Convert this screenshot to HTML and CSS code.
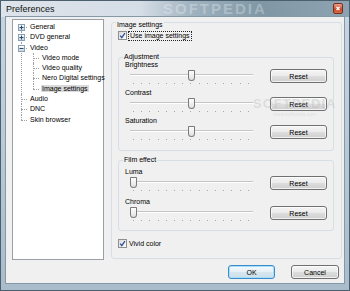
FILE: index.html
```html
<!DOCTYPE html>
<html lang="en">
<head>
    <meta charset="UTF-8">
    <title>Preferences</title>
    <link rel="stylesheet" href="styles.css">
</head>
<body>
    <div class="window">
        <div class="titlebar">
            <span class="title">Preferences</span>
            <span class="mark-title">SOFTPEDIA</span>
            <span class="close">
                <svg width="10" height="11" viewBox="0 0 10 11">
                    <path d="M3.5 4 L6.5 7 M6.5 4 L3.5 7" stroke="#fff" stroke-width="1.2"/>
                </svg>
            </span>
        </div>

        <div class="client">
            <div class="main">
                <!-- arvore de paginas -->
                <div class="tree">
                    <ul class="root">
                        <li class="first"><span class="exp"><svg width="7" height="7" viewBox="0 0 7 7"><path d="M1.5 3.5 H5.5 M3.5 1.5 V5.5" stroke="#2a4a6e"/></svg></span><span class="label">General</span></li>
                        <li><span class="exp"><svg width="7" height="7" viewBox="0 0 7 7"><path d="M1.5 3.5 H5.5 M3.5 1.5 V5.5" stroke="#2a4a6e"/></svg></span><span class="label">DVD general</span></li>
                        <li><span class="exp"><svg width="7" height="7" viewBox="0 0 7 7"><path d="M1.5 3.5 H5.5" stroke="#2a4a6e"/></svg></span><span class="label">Video</span>
                            <ul class="children">
                                <li><span class="label">Video mode</span></li>
                                <li><span class="label">Video quality</span></li>
                                <li><span class="label">Nero Digital settings</span></li>
                                <li class="last"><span class="label selected">Image settings</span></li>
                            </ul>
                        </li>
                        <li><span class="label">Audio</span></li>
                        <li><span class="label">DNC</span></li>
                        <li class="last"><span class="label">Skin browser</span></li>
                    </ul>
                </div>

                <div class="page">
                    <div class="page-title">Image settings</div>
                    <label class="check">
                        <span class="box"><svg width="9" height="9" viewBox="0 0 9 9"><path d="M2.2 4.6 L3.8 6.6 L6.9 2.2" fill="none" stroke="#2c4d9c" stroke-width="1.3"/></svg></span>
                        <span class="focus">Use image settings</span>
                    </label>

                    <div class="group adjust">
                        <div class="legend">Adjustment</div>
                        <div class="slider-row">
                            <div class="slider-col">
                                <div class="slider-label">Brightness</div>
                                <div class="slider"><span class="track"></span><span class="ticks"></span><span class="thumb" style="left:58px"></span></div>
                            </div>
                            <button class="btn">Reset</button>
                        </div>
                        <div class="slider-row">
                            <div class="slider-col">
                                <div class="slider-label">Contrast</div>
                                <div class="slider"><span class="track"></span><span class="ticks"></span><span class="thumb" style="left:58px"></span></div>
                            </div>
                            <button class="btn">Reset</button>
                        </div>
                        <div class="slider-row">
                            <div class="slider-col">
                                <div class="slider-label">Saturation</div>
                                <div class="slider"><span class="track"></span><span class="ticks"></span><span class="thumb" style="left:58px"></span></div>
                            </div>
                            <button class="btn">Reset</button>
                        </div>
                    </div>

                    <div class="group film">
                        <div class="legend">Film effect</div>
                        <div class="slider-row">
                            <div class="slider-col">
                                <div class="slider-label">Luma</div>
                                <div class="slider"><span class="track"></span><span class="ticks"></span><span class="thumb" style="left:0px"></span></div>
                            </div>
                            <button class="btn">Reset</button>
                        </div>
                        <div class="slider-row">
                            <div class="slider-col">
                                <div class="slider-label">Chroma</div>
                                <div class="slider"><span class="track"></span><span class="ticks"></span><span class="thumb" style="left:0px"></span></div>
                            </div>
                            <button class="btn">Reset</button>
                        </div>
                    </div>

                    <label class="check vivid">
                        <span class="box"><svg width="9" height="9" viewBox="0 0 9 9"><path d="M2.2 4.6 L3.8 6.6 L6.9 2.2" fill="none" stroke="#2c4d9c" stroke-width="1.3"/></svg></span>
                        <span>Vivid color</span>
                    </label>

                    <div class="mark-page">SOFTPEDIA<small>www.softpedia.com</small></div>
                </div>
            </div>

            <div class="actions">
                <button class="btn default">OK</button>
                <button class="btn cancel">Cancel</button>
            </div>
        </div>
    </div>
</body>
</html>
```

FILE: styles.css
```css
* {
    margin: 0;
    padding: 0;
    box-sizing: border-box;
}

body {
    font-family: "Liberation Sans", Arial, sans-serif;
    font-size: 7px;
    color: #000;
    background: #6f8595;
}

.window {
    width: 350px;
    height: 291px;
    display: flex;
    flex-direction: column;
    padding: 0 4px 6px 4px;
    border: 1px solid #4c5f6e;
    background:
        linear-gradient(to right, #dde3ea 0%, #d5dde6 40%, #9fb2bf 55%, #7f97a5 75%, #8ea3b1 100%) no-repeat top / 100% 16px,
        linear-gradient(to bottom, #c8d6e2, #a9bccb);
}

.titlebar {
    position: relative;
    height: 15px;
    display: flex;
    align-items: center;
    justify-content: space-between;
    padding-left: 1px;
}

.title {
    font-size: 9px;
    color: #111;
}

.mark-title {
    position: absolute;
    left: 158px;
    top: -1px;
    font-size: 15px;
    font-weight: bold;
    letter-spacing: 2px;
    color: rgba(255, 255, 255, 0.28);
}

.close {
    width: 10px;
    height: 11px;
    margin-right: 2px;
    border: 1px solid #7b2e1f;
    border-radius: 2px;
    background: linear-gradient(#e9a08a, #d2593d 50%, #c1401f 51%, #d86a45);
    display: flex;
}

.close svg {
    margin: -1px;
}

.client {
    flex: 1;
    display: flex;
    flex-direction: column;
    background: #f0f0f0;
    border: 1px solid #8598a6;
    padding: 2px 2px 4px 6px;
}

.main {
    display: flex;
    gap: 7px;
    height: 241px;
}

/* arvore */
.tree {
    width: 92px;
    height: 241px;
    background: #fff;
    border: 1px solid #9a9fa5;
    padding-top: 2px;
    line-height: 10.3px;
}

.tree ul {
    list-style: none;
}

.tree li {
    position: relative;
    padding-left: 16px;
    white-space: nowrap;
}

.tree li::before {
    content: "";
    position: absolute;
    left: 8px;
    top: 5px;
    width: 6px;
    border-top: 1px dotted #a0a0a0;
}

.tree li::after {
    content: "";
    position: absolute;
    left: 8px;
    top: 0;
    bottom: 0;
    border-left: 1px dotted #a0a0a0;
}

.tree li.first::after {
    top: 5px;
}

.tree li.last::after {
    bottom: auto;
    height: 5px;
}

.tree .children {
    margin-left: -4px;
}

.exp {
    position: absolute;
    left: 5px;
    top: 2px;
    width: 7px;
    height: 7px;
    z-index: 1;
    border: 1px solid #8aa0b5;
    background: linear-gradient(#ffffff, #c9d3dc);
    display: flex;
}

.exp svg {
    margin: -1px;
}

.label {
    padding: 0 1px;
}

.label.selected {
    background: #d9d9d9;
}

/* pagina da direita */
.page {
    position: relative;
    width: 231px;
    height: 237px;
    margin-top: 3px;
    border: 1px solid #d5dfe5;
    border-radius: 3px;
    padding: 0 7px 0 6px;
    display: flex;
    flex-direction: column;
}

.page-title {
    margin: -2px 0 0 -2px;
    line-height: 8px;
    width: fit-content;
    padding: 0 1px;
    background: #f0f0f0;
}

.check {
    display: flex;
    align-items: center;
    gap: 2px;
    height: 9px;
    margin-top: 2px;
    line-height: 8px;
}

.box {
    width: 9px;
    height: 9px;
    border: 1px solid #8f8f8f;
    background: linear-gradient(135deg, #dcdcdc, #fbfbfb);
    display: flex;
}

.box svg {
    margin: -1px;
}

.focus {
    outline: 1px dotted #222;
    padding: 0 1px;
}

.group {
    border: 1px solid #d5dfe5;
    border-radius: 3px;
    padding: 0 6px 5px 6px;
    display: flex;
    flex-direction: column;
}

.adjust {
    margin-top: 17px;
}

.film {
    margin-top: 9px;
    padding-bottom: 2px;
}

.legend {
    width: fit-content;
    margin: -5px 0 0 -2px;
    padding: 0 1px;
    line-height: 8px;
    background: #f0f0f0;
}

.slider-row {
    display: flex;
    justify-content: space-between;
    align-items: flex-start;
    height: 28px;
}

.adjust .slider-row:first-of-type {
    margin-top: 2px;
}

.film .slider-row {
    height: 30px;
}

.film .legend + .slider-row {
    margin-top: 4px;
}

.slider-label {
    line-height: 8px;
}

.slider {
    position: relative;
    width: 123px;
    height: 18px;
    margin-left: 5px;
}

.track {
    position: absolute;
    left: 0;
    right: 0;
    top: 5px;
    height: 2px;
    background: #c3c6c9;
    border-bottom: 1px solid #fff;
}

.ticks {
    position: absolute;
    left: 3px;
    right: 2px;
    top: 14px;
    height: 1px;
    background: repeating-linear-gradient(to right, #a8a8a8 0 1px, transparent 1px 8.2px);
}

.thumb {
    position: absolute;
    top: 1px;
    width: 7px;
    height: 11px;
    border: 1px solid #7a7a7a;
    border-radius: 1px 1px 4px 4px;
    background: linear-gradient(#fdfdfd, #e2e2e2);
}

.btn {
    width: 57px;
    height: 14px;
    margin-top: 8px;
    border: 1px solid #707070;
    border-radius: 3px;
    background: linear-gradient(#f4f4f4 0%, #ebebeb 48%, #dddddd 52%, #cfcfcf 100%);
    box-shadow: inset 0 0 0 1px rgba(255, 255, 255, 0.7);
    font-family: inherit;
    font-size: 7px;
    color: #000;
}

.vivid {
    margin-top: 8px;
}

.mark-page {
    position: absolute;
    left: 141px;
    top: 74px;
    font-size: 13px;
    font-weight: bold;
    letter-spacing: 1px;
    color: rgba(170, 170, 170, 0.28);
    display: flex;
    flex-direction: column;
    align-items: center;
    line-height: 13px;
}

.mark-page small {
    font-size: 5px;
    font-weight: normal;
    letter-spacing: 0;
    line-height: 8px;
}

.actions {
    display: flex;
    justify-content: flex-end;
    gap: 16px;
    margin-top: 5px;
    padding-right: 3px;
}

.actions .btn {
    margin-top: 0;
    width: 47px;
}

.actions .cancel {
    width: 48px;
}

.btn.default {
    border-color: #3c8ccc;
    background: linear-gradient(#f5fafd 0%, #e7f0f6 48%, #d8e6ef 52%, #cddfea 100%);
    box-shadow: inset 0 0 0 1px #a6dff8;
}
```
